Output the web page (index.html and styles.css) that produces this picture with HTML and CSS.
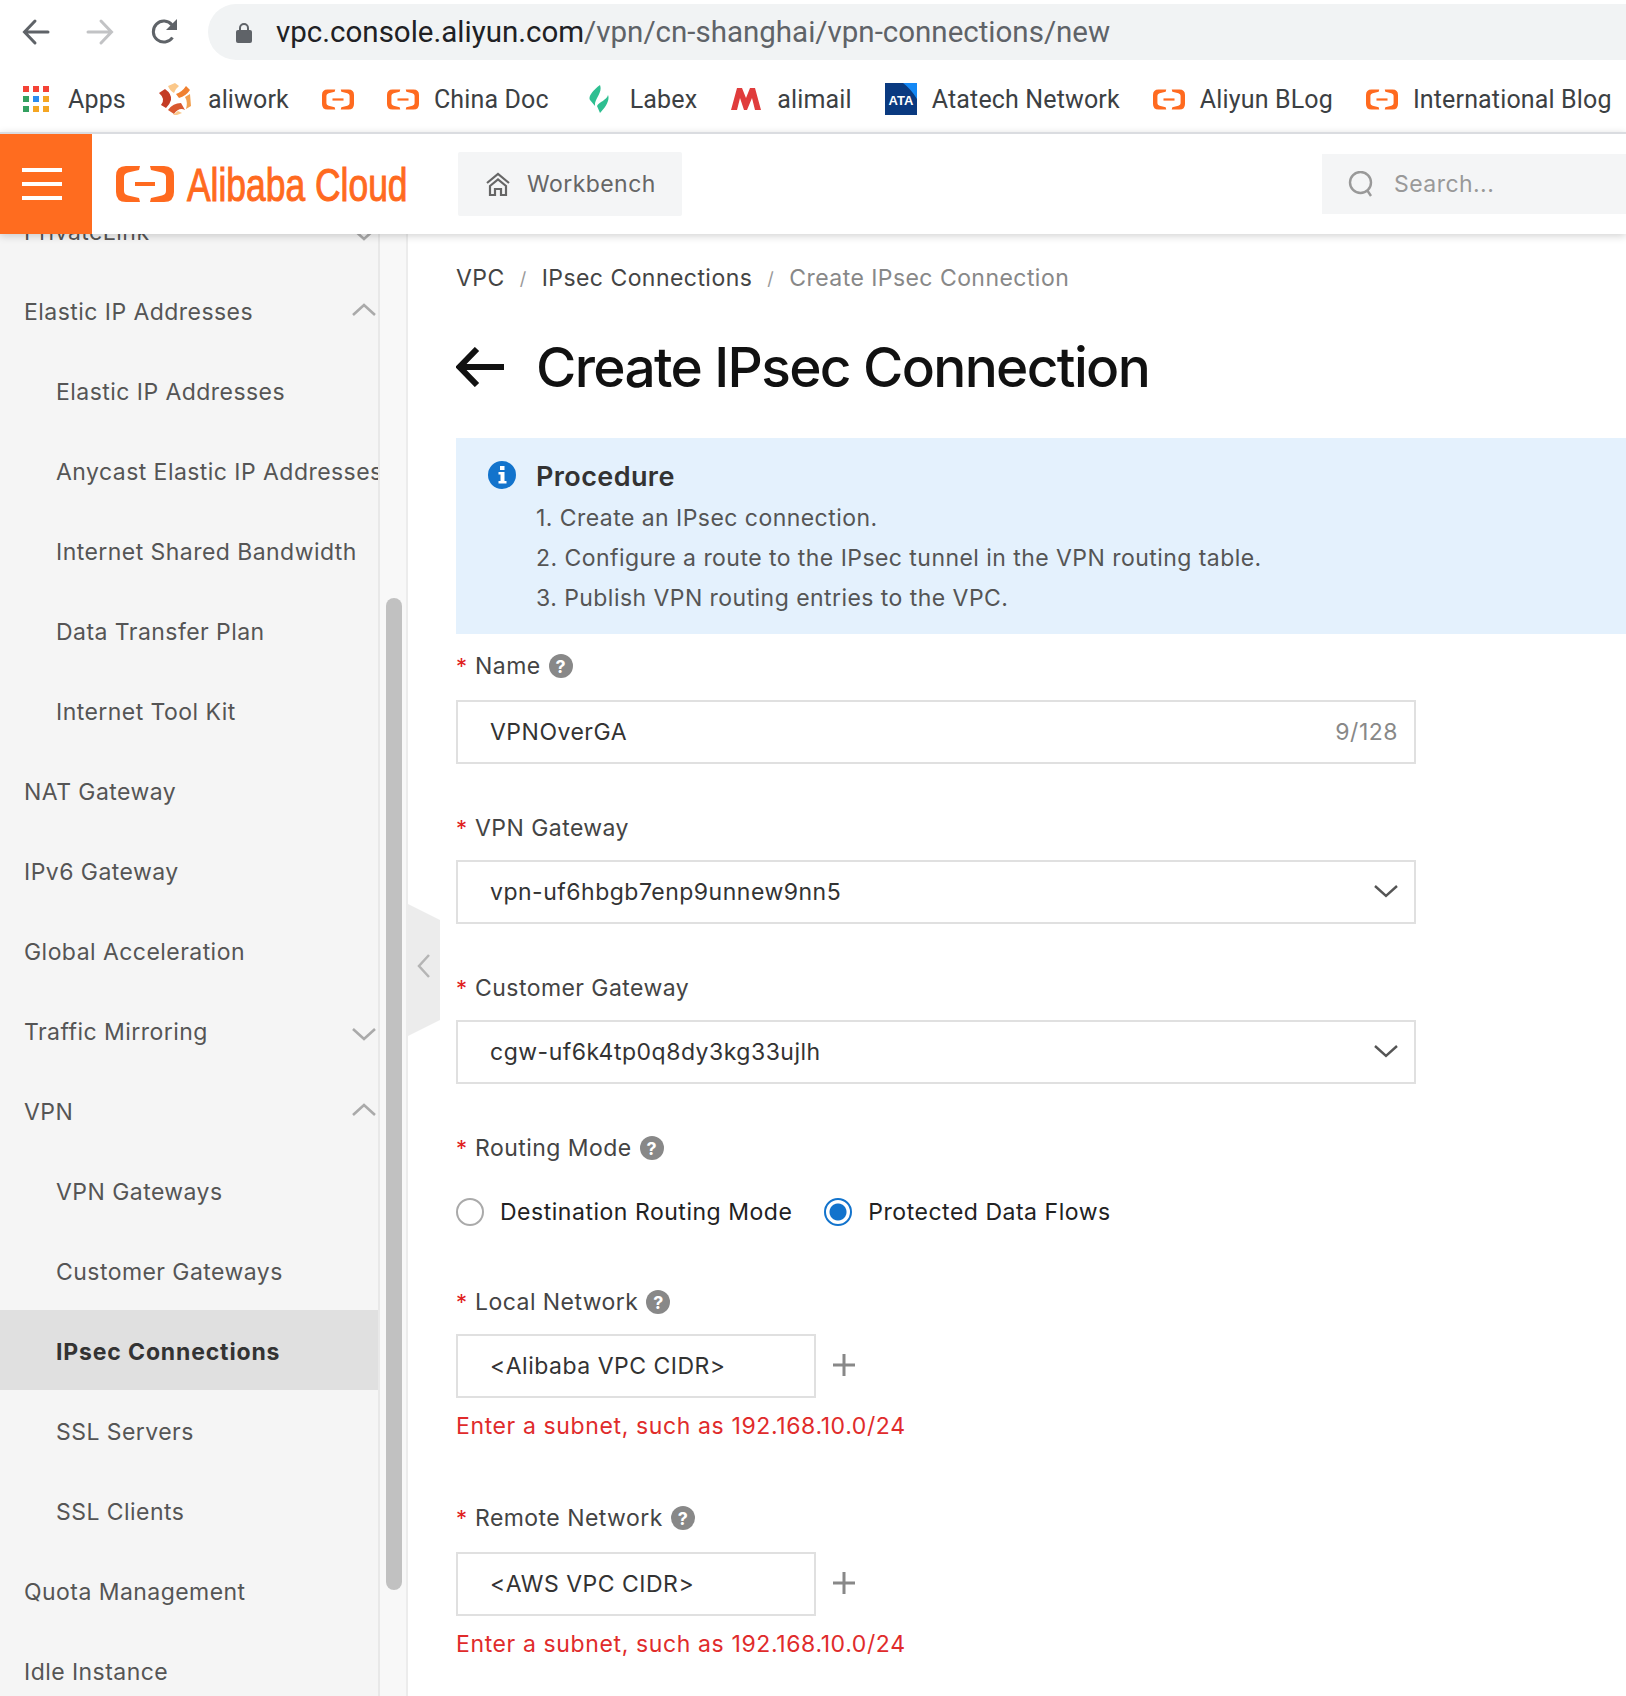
FILE: index.html
```html
<!DOCTYPE html>
<html lang="en">
<head>
<meta charset="utf-8">
<title>Create IPsec Connection</title>
<link rel="stylesheet" href="styles.css">
</head>
<body>
<svg class="defs" width="0" height="0"><defs><g id="ali-mark"><path d="M24 0H10Q0 0 0 10V26Q0 36 10 36H24L23 32 12 29.500Q8 28.500 8 25V11Q8 7.500 12 6.500L23 4zM34 0H48Q58 0 58 10V26Q58 36 48 36H34L35 32 46 29.500Q50 28.500 50 25V11Q50 7.500 46 6.500L35 4z" fill="#ff6a1f"/><rect x="19" y="16" width="20" height="4" fill="#ff6a1f"/></g></defs></svg>
<div class="browser">
  <div class="toolbar">
    <svg class="nav-icon" viewBox="0 0 28 28"><path d="M26 14H3M13 3 2.500 14 13 25" fill="none" stroke="#5f6368" stroke-width="3" stroke-linecap="round"/></svg>
    <svg class="nav-icon" viewBox="0 0 28 28"><path d="M2 14h23M15 3l10.500 11L15 25" fill="none" stroke="#c2c3c5" stroke-width="3" stroke-linecap="round"/></svg>
    <svg class="nav-icon" viewBox="0 0 28 28"><path d="M22.500 19.500A10.500 10.500 0 1 1 22 7" fill="none" stroke="#5f6368" stroke-width="3"/><path d="M27 1v11H16z" fill="#5f6368"/></svg>
    <div class="omnibox">
      <svg class="lock" viewBox="0 0 16 21"><path d="M4 9V6a4 4 0 0 1 8 0v3" fill="none" stroke="#5f6368" stroke-width="2"/><rect x="0" y="8" width="16" height="13" rx="2" fill="#5f6368"/></svg>
      <span class="url">vpc.console.aliyun.com<span class="url-path">/vpn/cn-shanghai/vpn-connections/new</span></span>
    </div>
  </div>
  <div class="bookmarks">
    <div class="bookmark"><svg class="bm-icon bm-apps" viewBox="0 0 26 26"><rect x="0" y="0" width="6" height="6" fill="#f44336"/><rect x="10" y="0" width="6" height="6" fill="#f44336"/><rect x="20" y="0" width="6" height="6" fill="#f44336"/><rect x="0" y="10" width="6" height="6" fill="#34a060"/><rect x="10" y="10" width="6" height="6" fill="#2b8cf0"/><rect x="20" y="10" width="6" height="6" fill="#f5a623"/><rect x="0" y="20" width="6" height="6" fill="#34a060"/><rect x="10" y="20" width="6" height="6" fill="#f5a623"/><rect x="20" y="20" width="6" height="6" fill="#f5a623"/></svg>Apps</div>
    <div class="bookmark"><svg class="bm-icon bm-aliwork" viewBox="0 0 32 32"><path d="M9 3 16 0l4 3Q16 6 15 10Q11 8 9 3z" fill="#fbc88a"/><path d="M17 11Q23 9 27 3L31 7Q27 13 20 15z" fill="#f08030"/><path d="M0 10 6 6Q13 11 12 17Q11 21 7 25L2 22Q7 16 0 10z" fill="#c43c26"/><path d="M26 14 31 11 32 23 27 26Q29 19 26 14z" fill="#f2a050"/><path d="M9 27Q14 20 22 20L26 27Q20 24 15 31z" fill="#d9582f"/><path d="M14 32l5-4 4 2-5 2z" fill="#fbc88a"/></svg>aliwork</div>
    <div class="bookmark"><svg class="bm-icon ali solo" viewBox="0 0 58 36"><use href="#ali-mark"/></svg></div>
    <div class="bookmark"><svg class="bm-icon ali" viewBox="0 0 58 36"><use href="#ali-mark"/></svg>China Doc</div>
    <div class="bookmark"><svg class="bm-icon bm-labex" viewBox="0 0 20 28"><path d="M11 0C3 6-1 12 1 15l5 6C5 14 14 8 11 0zM19 10C18 15 10 17 8 21l3 7C17 22 21 15 19 10z" fill="#2ebf91"/></svg>Labex</div>
    <div class="bookmark"><svg class="bm-icon" viewBox="0 0 32 24"><path d="M1 23 7 1h5l4 10 4-10h5l6 22h-6L22 11l-5 12h-3L10 11 7 23z" fill="#e03c3c"/></svg>alimail</div>
    <div class="bookmark"><svg class="bm-icon" viewBox="0 0 32 32"><rect width="32" height="32" fill="#0a3a80"/><path d="M18 0h14v16Q26 6 18 0z" fill="#1488f5"/><text x="16" y="22" class="ata-text">ATA</text></svg>Atatech Network</div>
    <div class="bookmark"><svg class="bm-icon ali" viewBox="0 0 58 36"><use href="#ali-mark"/></svg>Aliyun BLog</div>
    <div class="bookmark"><svg class="bm-icon ali" viewBox="0 0 58 36"><use href="#ali-mark"/></svg>International Blog</div>
  </div>
</div>

<header class="topbar">
  <div class="menu-btn"><span></span><span></span><span></span></div>
  <div class="logo"><svg class="logo-mark" viewBox="0 0 58 36"><use href="#ali-mark"/></svg><span class="logo-text">Alibaba Cloud</span></div>
  <div class="workbench"><svg class="home" viewBox="0 0 26 24"><path d="M2 11 13 2l11 9" fill="none" stroke="#666" stroke-width="2.200"/><path d="M5 14l8-6.500 8 6.500v9h-5v-6h-6v6H5z" fill="none" stroke="#666" stroke-width="2.200"/></svg>Workbench</div>
  <div class="search"><svg class="search-icon" viewBox="0 0 26 26"><circle cx="12.500" cy="11.500" r="10.500" fill="none" stroke="#999" stroke-width="2.400"/><path d="m19 19 4 6" stroke="#999" stroke-width="2.400"/></svg>Search...</div>
</header>

<div class="shell">
  <aside class="sidebar">
    <nav class="nav">
      <div class="nav-item">PrivateLink<svg class="chev down" viewBox="0 0 24 14"><path d="M1 2l11 10L23 2" fill="none" stroke="#aaa" stroke-width="2.600"/></svg></div>
      <div class="nav-item">Elastic IP Addresses<svg class="chev up" viewBox="0 0 24 14"><path d="M1 12 12 2l11 10" fill="none" stroke="#aaa" stroke-width="2.600"/></svg></div>
      <div class="nav-item sub">Elastic IP Addresses</div>
      <div class="nav-item sub">Anycast Elastic IP Addresses</div>
      <div class="nav-item sub">Internet Shared Bandwidth</div>
      <div class="nav-item sub">Data Transfer Plan</div>
      <div class="nav-item sub">Internet Tool Kit</div>
      <div class="nav-item">NAT Gateway</div>
      <div class="nav-item">IPv6 Gateway</div>
      <div class="nav-item">Global Acceleration</div>
      <div class="nav-item">Traffic Mirroring<svg class="chev down" viewBox="0 0 24 14"><path d="M1 2l11 10L23 2" fill="none" stroke="#aaa" stroke-width="2.600"/></svg></div>
      <div class="nav-item">VPN<svg class="chev up" viewBox="0 0 24 14"><path d="M1 12 12 2l11 10" fill="none" stroke="#aaa" stroke-width="2.600"/></svg></div>
      <div class="nav-item sub">VPN Gateways</div>
      <div class="nav-item sub">Customer Gateways</div>
      <div class="nav-item sub active">IPsec Connections</div>
      <div class="nav-item sub">SSL Servers</div>
      <div class="nav-item sub">SSL Clients</div>
      <div class="nav-item">Quota Management</div>
      <div class="nav-item">Idle Instance</div>
    </nav>
  </aside>
  <div class="scroll-track"><div class="scroll-thumb"></div></div>
  <main class="main">
    <div class="collapse"><svg class="collapse-icon" viewBox="0 0 14 26"><path d="M12 2 2 13l10 11" fill="none" stroke="#b5b5b5" stroke-width="2.500"/></svg></div>
    <div class="crumbs"><span>VPC</span><i>/</i><span>IPsec Connections</span><i>/</i><span class="crumb-current">Create IPsec Connection</span></div>
    <h1 class="title"><svg class="back" viewBox="0 0 48 40"><path d="M48 20H5M21 2 3.500 20 21 38" fill="none" stroke="#111" stroke-width="6"/></svg>Create IPsec Connection</h1>
    <section class="notice">
      <svg class="info" viewBox="0 0 28 28"><circle cx="14" cy="14" r="14" fill="#1273cc"/><path d="M10.500 11h6v9h2v2.500h-8V20h2v-6.500h-2z" fill="#fff"/><rect x="12" y="5" width="4.500" height="4" fill="#fff"/></svg>
      <div class="notice-body">
        <h2>Procedure</h2>
        <p>1. Create an IPsec connection.</p>
        <p>2. Configure a route to the IPsec tunnel in the VPN routing table.</p>
        <p>3. Publish VPN routing entries to the VPC.</p>
      </div>
    </section>
    <form class="form">
      <div class="field f-name">
        <div class="label"><b>*</b>Name<em class="help">?</em></div>
        <div class="box wide"><span>VPNOverGA</span><span class="count">9/128</span></div>
      </div>
      <div class="field">
        <div class="label"><b>*</b>VPN Gateway</div>
        <div class="box wide"><span>vpn-uf6hbgb7enp9unnew9nn5</span><svg class="caret" viewBox="0 0 24 14"><path d="M1 2l11 10L23 2" fill="none" stroke="#555" stroke-width="2.400"/></svg></div>
      </div>
      <div class="field">
        <div class="label"><b>*</b>Customer Gateway</div>
        <div class="box wide"><span>cgw-uf6k4tp0q8dy3kg33ujlh</span><svg class="caret" viewBox="0 0 24 14"><path d="M1 2l11 10L23 2" fill="none" stroke="#555" stroke-width="2.400"/></svg></div>
      </div>
      <div class="field f-routing">
        <div class="label"><b>*</b>Routing Mode<em class="help">?</em></div>
        <div class="radios">
          <label class="radio"><span class="dot"></span>Destination Routing Mode</label>
          <label class="radio on"><span class="dot"></span>Protected Data Flows</label>
        </div>
      </div>
      <div class="field f-net">
        <div class="label"><b>*</b>Local Network<em class="help">?</em></div>
        <div class="net-row"><div class="box narrow"><span>&lt;Alibaba VPC CIDR&gt;</span></div><svg class="plus" viewBox="0 0 22 22"><path d="M11 0v22M0 11h22" stroke="#888" stroke-width="3"/></svg></div>
        <div class="error">Enter a subnet, such as 192.168.10.0/24</div>
      </div>
      <div class="field f-net f-remote">
        <div class="label"><b>*</b>Remote Network<em class="help">?</em></div>
        <div class="net-row"><div class="box narrow"><span>&lt;AWS VPC CIDR&gt;</span></div><svg class="plus" viewBox="0 0 22 22"><path d="M11 0v22M0 11h22" stroke="#888" stroke-width="3"/></svg></div>
        <div class="error">Enter a subnet, such as 192.168.10.0/24</div>
      </div>
    </form>
  </main>
</div>
</body>
</html>
```
FILE: styles.css
```css
* { box-sizing: border-box; }
html, body { margin: 0; padding: 0; }
body { width: 1626px; height: 1696px; overflow: hidden; background: #fff; font-family: Inter, "Noto Sans", sans-serif; color: #333; display: flex; flex-direction: column; }

.defs { position: absolute; }
.browser { height: 132px; flex: none; background: #fff; }
.toolbar { height: 64px; display: flex; align-items: center; }
.nav-icon { width: 28px; height: 28px; margin-left: 22px; margin-right: 14px; flex: none; }
.omnibox { margin-left: 16px; flex: 1; height: 56px; background: #f1f3f4; border-radius: 28px 0 0 28px; display: flex; align-items: center; padding-left: 28px; }
.lock { width: 16px; height: 21px; margin-right: 24px; }
.url { font-family: Roboto, sans-serif; font-size: 29.500px; color: #202124; white-space: nowrap; }
.url-path { color: #5f6368; }
.bookmarks { height: 68px; display: flex; align-items: center; padding: 2px 0 0 23px; white-space: nowrap; font-family: Roboto, sans-serif; font-size: 25px; letter-spacing: .15px; color: #3c4043; }
.bookmark { display: flex; align-items: center; margin-right: 33px; }
.bm-icon { width: 32px; height: 32px; margin-right: 15px; flex: none; }
.bm-apps { width: 26px; height: 26px; margin-right: 19px; }
.bm-aliwork { margin-right: 17px; }
.bm-labex { width: 20px; height: 28px; margin-right: 21px; margin-left: 7px; }
.ali { height: 21px; }
.solo { margin-right: 0; }
.ata-text { font: 700 13px "Liberation Sans", sans-serif; fill: #fff; text-anchor: middle; }

.topbar { position: relative; z-index: 3; height: 102px; flex: none; border-top: 2px solid #dadce0; background: #fff; box-shadow: 0 2px 8px rgba(0,0,0,.18); display: flex; align-items: center; font-size: 23px; }
.menu-btn { width: 92px; height: 100px; background: #ff6c1f; display: flex; flex-direction: column; justify-content: center; align-items: center; gap: 10px; flex: none; padding-right: 8px; }
.menu-btn span { width: 40px; height: 4px; background: #fff; }
.logo { display: flex; align-items: center; margin-left: 24px; width: 342px; flex: none; }
.logo-mark { width: 58px; height: 36px; flex: none; }
.logo-text { font-family: "Liberation Sans", sans-serif; font-size: 46px; color: #ff6a1f; white-space: nowrap; margin: 2px 0 0 13px; transform: scaleX(.77); transform-origin: left center; -webkit-text-stroke: 1px #ff6a1f; }
.workbench { width: 224px; height: 64px; background: #f4f5f6; border-radius: 2px; display: flex; align-items: center; padding-left: 27px; color: #666; letter-spacing: .45px; }
.home { width: 26px; height: 24px; margin-right: 16px; }
.search { margin-left: auto; width: 304px; height: 60px; background: #f4f5f6; display: flex; align-items: center; padding-left: 26px; color: #999; letter-spacing: .45px; }
.search-icon { width: 26px; height: 26px; margin-right: 20px; }

.shell { flex: 1; display: flex; min-height: 0; overflow: hidden; }
.sidebar { width: 380px; flex: none; background: #f5f5f5; border-right: 2px solid #e8e8e8; overflow: hidden; }
.nav { margin-top: -44px; }
.nav-item { height: 80px; display: flex; align-items: center; justify-content: space-between; padding: 4px 2px 0 24px; font-size: 23px; color: #555; letter-spacing: .45px; white-space: nowrap; overflow: hidden; }
.nav-item.sub { padding-left: 56px; padding-right: 0; }
.nav-item.active { background: #e0e0e0; color: #333; font-weight: 700; letter-spacing: .85px; }
.chev { width: 24px; height: 14px; flex: none; }
.chev.up { margin-top: -4px; }
.chev.down { margin-top: 4px; }
.scroll-track { width: 28px; flex: none; background: #f8f8f8; border-right: 2px solid #ececec; padding: 364px 5px 0 6px; }
.scroll-thumb { width: 16px; height: 992px; background: #c1c1c1; border-radius: 8px; }

.main { position: relative; flex: 1; padding: 0 0 0 48px; background: #fff; min-width: 0; }
.collapse { position: absolute; left: 0; top: 670px; width: 32px; height: 132px; background: #ececec; clip-path: polygon(0 0, 100% 16px, 100% 116px, 0 100%); display: flex; align-items: center; padding-left: 9px; }
.collapse-icon { width: 14px; height: 26px; margin-top: -8px; }
.crumbs { margin-top: 30px; height: 28px; display: flex; align-items: center; font-size: 23px; letter-spacing: .45px; color: #444; }
.crumbs i { font-style: normal; font-size: 18px; color: #999; margin: 0 15px; }
.crumb-current { color: #888; }
.title { display: flex; align-items: center; margin: 39px 0 0; height: 72px; font-size: 55px; font-weight: 500; color: #111; letter-spacing: -1.650px; }
.back { width: 48px; height: 40px; margin-right: 32px; }
.notice { display: flex; margin-top: 35px; height: 196px; background: #e4f1fd; padding: 23px 0 0 32px; }
.info { width: 28px; height: 28px; margin-right: 20px; flex: none; }
.notice-body { color: #555; font-size: 23px; letter-spacing: .45px; }
.notice-body h2 { margin: 0 0 5px; font-size: 27px; line-height: 32px; font-weight: 600; color: #333; letter-spacing: .4px; }
.notice-body p { margin: 0; height: 40px; line-height: 40px; }
.form { display: flex; flex-direction: column; }
.field { height: 160px; }
.f-name { padding-top: 18px; height: 180px; }
.label { display: flex; align-items: center; height: 28px; font-size: 23px; letter-spacing: .45px; color: #444; }
.label b { color: #e02020; font-weight: 400; width: 19px; font-size: 22px; }
.help { margin-left: 8px; width: 24px; height: 24px; border-radius: 50%; background: #888; color: #fff; font-style: normal; font-weight: 700; font-size: 18px; display: flex; align-items: center; justify-content: center; letter-spacing: 0; }
.box { margin-top: 18px; height: 64px; border: 2px solid #e0e0e0; display: flex; align-items: center; justify-content: space-between; padding: 0 16px 0 32px; font-size: 23px; letter-spacing: .5px; color: #333; background: #fff; }
.f-name .box { margin-top: 20px; }
.wide { width: 960px; }
.narrow { width: 360px; margin-top: 0; flex: none; }
.count { color: #888; }
.caret { width: 24px; height: 14px; margin-top: -2px; }
.radios { display: flex; margin-top: 36px; }
.radio { display: flex; align-items: center; font-size: 23px; letter-spacing: .52px; color: #222; margin-right: 32px; }
.dot { width: 28px; height: 28px; border-radius: 50%; border: 2px solid #aaa; margin-right: 16px; background: #fff; }
.on .dot { border-color: #1273cc; background: radial-gradient(circle, #1273cc 0 8px, #fff 9px); }
.f-routing { height: 154px; }
.net-row { display: flex; align-items: center; margin-top: 18px; }
.f-remote .net-row { margin-top: 20px; }
.plus { width: 22px; height: 22px; margin-left: 17px; margin-top: -2px; }
.error { margin-top: 14px; font-size: 23px; letter-spacing: .62px; color: #e02b2b; }
.f-net { height: 216px; }
```
